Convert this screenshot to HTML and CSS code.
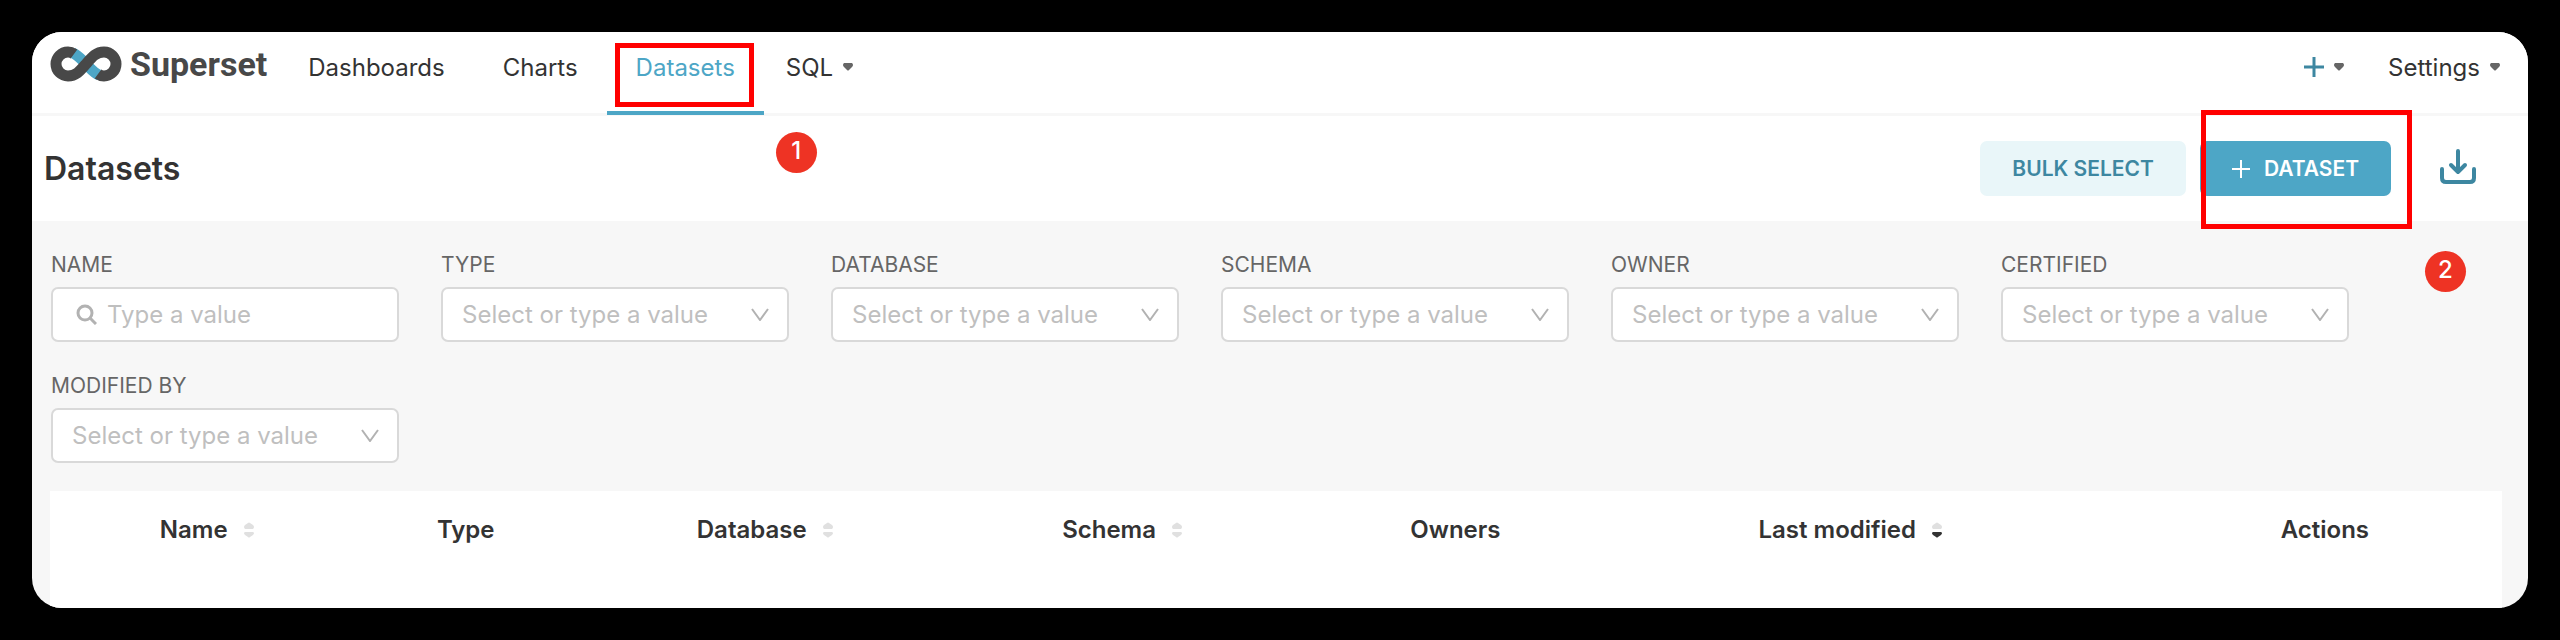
FILE: index.html
```html
<!DOCTYPE html>
<html lang="en">
<head>
    <meta charset="UTF-8">
    <meta name="viewport" content="width=device-width, initial-scale=1.0">
    <title>Superset - Datasets</title>
    <link rel="stylesheet" href="styles.css">
</head>
<body>
    <div class="app">
        <nav class="navbar">
            <a class="brand" href="#">
                <svg class="brand-logo" viewBox="0 0 72 36" fill="none" aria-hidden="true">
                    <path d="M23 7 C28 9 32 14 36 18 C40 22 44 27 49 29" stroke="#4da6c6" stroke-width="11"/>
                    <path d="M24 8 C22 6.500 20 6 18 6 A12 12 0 0 0 18 30 C26 30 30 25 36 18 C42 11 46 6 54 6 A12 12 0 0 1 54 30 C52 30 50 29.500 48 28" stroke="#484848" stroke-width="11"/>
                </svg>
                <span>Superset</span>
            </a>
            <ul class="menu">
                <li><a href="#">Dashboards</a></li>
                <li><a href="#">Charts</a></li>
                <li class="active">
                    <a href="#">Datasets</a>
                    <span class="outline outline-nav"></span>
                    <span class="step step-nav">1</span>
                </li>
                <li class="dropdown"><a href="#">SQL <svg class="caret" viewBox="0 0 10 8"><path d="M1 0H9Q11 2 9 4L6 7Q5 8 4 7L1 4Q-1 2 1 0Z"/></svg></a></li>
            </ul>
            <ul class="menu menu-right">
                <li><a href="#" aria-label="Create new"><svg class="plus" viewBox="0 0 20 20"><path d="M10 0V20M0 10H20"/></svg> <svg class="caret" viewBox="0 0 10 8"><path d="M1 0H9Q11 2 9 4L6 7Q5 8 4 7L1 4Q-1 2 1 0Z"/></svg></a></li>
                <li><a href="#">Settings <svg class="caret" viewBox="0 0 10 8"><path d="M1 0H9Q11 2 9 4L6 7Q5 8 4 7L1 4Q-1 2 1 0Z"/></svg></a></li>
            </ul>
        </nav>

        <header class="page-header">
            <h1>Datasets</h1>
            <div class="actions">
                <button class="btn btn-secondary" type="button">BULK SELECT</button>
                <div class="create">
                    <button class="btn btn-primary" type="button">
                        <svg class="btn-plus" viewBox="0 0 18 18"><path d="M9 0V18M0 9H18"/></svg>
                        DATASET
                    </button>
                    <span class="outline outline-create"></span>
                    <span class="step step-create">2</span>
                </div>
                <button class="btn-import" type="button" aria-label="Import datasets">
                    <svg viewBox="0 2 36 36"><path d="M18 2V23M11 16L18 23L25 16M2 20V29Q2 33 6 33H30Q34 33 34 29V20"/></svg>
                </button>
            </div>
        </header>

        <form class="filters">
            <div class="filter">
                <label for="name">NAME</label>
                <div class="field">
                    <svg class="search" viewBox="0 0 21 21"><circle cx="9" cy="9" r="7"/><path d="M14 14L20 20"/></svg>
                    <input id="name" type="text" placeholder="Type a value">
                </div>
            </div>
            <div class="filter">
                <label for="type">TYPE</label>
                <div class="field">
                    <select id="type"><option>Select or type a value</option></select>
                    <svg class="chevron" viewBox="0 0 18 13"><path d="M1 1L9 12L17 1"/></svg>
                </div>
            </div>
            <div class="filter">
                <label for="database">DATABASE</label>
                <div class="field">
                    <select id="database"><option>Select or type a value</option></select>
                    <svg class="chevron" viewBox="0 0 18 13"><path d="M1 1L9 12L17 1"/></svg>
                </div>
            </div>
            <div class="filter">
                <label for="schema">SCHEMA</label>
                <div class="field">
                    <select id="schema"><option>Select or type a value</option></select>
                    <svg class="chevron" viewBox="0 0 18 13"><path d="M1 1L9 12L17 1"/></svg>
                </div>
            </div>
            <div class="filter">
                <label for="owner">OWNER</label>
                <div class="field">
                    <select id="owner"><option>Select or type a value</option></select>
                    <svg class="chevron" viewBox="0 0 18 13"><path d="M1 1L9 12L17 1"/></svg>
                </div>
            </div>
            <div class="filter">
                <label for="certified">CERTIFIED</label>
                <div class="field">
                    <select id="certified"><option>Select or type a value</option></select>
                    <svg class="chevron" viewBox="0 0 18 13"><path d="M1 1L9 12L17 1"/></svg>
                </div>
            </div>
            <div class="filter">
                <label for="modified-by">MODIFIED BY</label>
                <div class="field">
                    <select id="modified-by"><option>Select or type a value</option></select>
                    <svg class="chevron" viewBox="0 0 18 13"><path d="M1 1L9 12L17 1"/></svg>
                </div>
            </div>
        </form>

        <main class="list">
            <table>
                <thead>
                    <tr>
                        <td class="col-icon"></td>
                        <th class="col-name">Name <svg class="sorter" viewBox="0 0 10 16"><path d="M1 7Q-1 5 1 3L4 1Q5 0 6 1L9 3Q11 5 9 7Z"/><path d="M1 10H9Q11 11 9 13L6 15Q5 16 4 15L1 13Q-1 11 1 10Z"/></svg></th>
                        <th class="col-type">Type</th>
                        <th class="col-database">Database <svg class="sorter" viewBox="0 0 10 16"><path d="M1 7Q-1 5 1 3L4 1Q5 0 6 1L9 3Q11 5 9 7Z"/><path d="M1 10H9Q11 11 9 13L6 15Q5 16 4 15L1 13Q-1 11 1 10Z"/></svg></th>
                        <th class="col-schema">Schema <svg class="sorter" viewBox="0 0 10 16"><path d="M1 7Q-1 5 1 3L4 1Q5 0 6 1L9 3Q11 5 9 7Z"/><path d="M1 10H9Q11 11 9 13L6 15Q5 16 4 15L1 13Q-1 11 1 10Z"/></svg></th>
                        <th class="col-owners">Owners</th>
                        <th class="col-modified">Last modified <svg class="sorter" viewBox="0 0 10 16"><path d="M1 7Q-1 5 1 3L4 1Q5 0 6 1L9 3Q11 5 9 7Z"/><path class="sorted" d="M1 10H9Q11 11 9 13L6 15Q5 16 4 15L1 13Q-1 11 1 10Z"/></svg></th>
                        <th>Actions</th>
                    </tr>
                </thead>
            </table>
        </main>
    </div>
</body>
</html>
```
FILE: styles.css
```css
* {
    box-sizing: border-box;
}

body {
    display: flex;
    min-height: 100vh;
    margin: 0;
    padding: 32px;
    background: #000;
    color: #333;
    font-family: Inter, 'Liberation Sans', sans-serif;
    font-size: 24px;
}

.app {
    display: flex;
    flex: 1;
    flex-direction: column;
    min-width: 0;
    border-radius: 30px;
    overflow: hidden;
    background: #f7f7f7;
}

a {
    color: inherit;
    text-decoration: none;
}

svg {
    flex: none;
}

/* Top navigation */
.navbar {
    display: flex;
    height: 84px;
    padding: 0 28px 0 18px;
    border-bottom: 3px solid #f7f7f7;
    background: #fff;
}

.brand {
    display: flex;
    align-items: center;
    gap: 8px;
    height: 64px;
    margin-right: 12px;
    color: #484848;
    font-family: Roboto, sans-serif;
    font-size: 34px;
    font-weight: 700;
}

.brand-logo {
    width: 72px;
    height: 36px;
}

.menu {
    display: flex;
    margin: 0;
    padding: 0;
    list-style: none;
}

.menu li {
    position: relative;
    padding: 0 29px;
}

.menu a {
    display: flex;
    align-items: center;
    gap: 10px;
    height: 70px;
}

.menu .active {
    color: #4da6c6;
}

.menu .active::after {
    content: '';
    position: absolute;
    right: 0;
    bottom: -2px;
    left: 0;
    height: 4px;
    background: #4da6c6;
}

.menu .dropdown {
    padding: 0 22px;
}

.menu-right {
    gap: 44px;
    margin-left: auto;
}

.menu-right li {
    padding: 0;
}

.caret {
    width: 10px;
    height: 8px;
    fill: #666;
}

.plus {
    width: 20px;
    height: 20px;
    stroke: #3d87a1;
    stroke-width: 3;
}

/* Page title and actions */
.page-header {
    display: flex;
    align-items: center;
    justify-content: space-between;
    height: 105px;
    padding: 0 52px 0 12px;
    background: #fff;
}

h1 {
    margin: 0;
    font-size: 32px;
    font-weight: 600;
}

.actions {
    display: flex;
    align-items: center;
    gap: 14px;
}

.btn {
    display: flex;
    align-items: center;
    gap: 14px;
    height: 55px;
    padding: 0 32px;
    border: 0;
    border-radius: 7px;
    font: 600 21px Inter, 'Liberation Sans', sans-serif;
    cursor: pointer;
}

.btn-secondary {
    background: #e9f6f9;
    color: #3d87a1;
}

.btn-primary {
    background: #4da6c6;
    color: #fff;
}

.btn-plus {
    width: 18px;
    height: 18px;
    stroke: #fff;
    stroke-width: 2;
}

.btn-import {
    height: 36px;
    margin-left: 35px;
    padding: 0;
    border: 0;
    background: none;
    cursor: pointer;
}

.btn-import svg {
    display: block;
    width: 36px;
    height: 36px;
    overflow: visible;
    fill: none;
    stroke: #3d87a1;
    stroke-width: 4;
    stroke-linecap: round;
    stroke-linejoin: round;
}

/* Walkthrough markers */
.create {
    position: relative;
}

.outline {
    position: absolute;
    z-index: 1;
    border: 5px solid #f00;
    pointer-events: none;
}

.outline-nav {
    top: 11px;
    right: 10px;
    bottom: 6px;
    left: 8px;
}

.outline-create {
    top: -31px;
    right: -21px;
    bottom: -33px;
    left: 1px;
}

.step {
    position: absolute;
    z-index: 1;
    width: 41px;
    height: 41px;
    border-radius: 50%;
    background: #ee3324;
    color: #fff;
    font-weight: 500;
    line-height: 38px;
    text-align: center;
}

.step-nav {
    top: 100px;
    right: -53px;
}

.step-create {
    top: 110px;
    right: -75px;
}

/* Filters */
.filters {
    display: flex;
    flex-wrap: wrap;
    gap: 28px 42px;
    padding: 28px 19px;
}

.filter {
    width: 348px;
}

.filter label {
    display: block;
    margin-bottom: 6px;
    color: #666;
    font-size: 21px;
    line-height: 32px;
}

.field {
    display: flex;
    align-items: center;
    position: relative;
    height: 55px;
    border: 2px solid #d9d9d9;
    border-radius: 7px;
    background: #fff;
}

.field input,
.field select {
    flex: 1;
    min-width: 0;
    height: 100%;
    padding: 0 19px;
    border: 0;
    outline: 0;
    background: none;
    color: #bfbfbf;
    font: 24px Inter, 'Liberation Sans', sans-serif;
    appearance: none;
}

.field input {
    padding: 0 10px;
}

.field input::placeholder {
    color: #bfbfbf;
}

.search {
    width: 21px;
    height: 21px;
    margin-left: 23px;
    fill: none;
    stroke: #b2b2b2;
    stroke-width: 3;
}

.chevron {
    position: absolute;
    right: 18px;
    width: 18px;
    height: 13px;
    fill: none;
    stroke: #b2b2b2;
    stroke-width: 2;
    pointer-events: none;
}

/* Dataset table */
.list {
    flex: 1;
    margin: 0 26px 0 18px;
    background: #fff;
}

table {
    width: 100%;
    border-collapse: collapse;
    table-layout: fixed;
}

th {
    height: 77px;
    padding: 0 24px;
    font-weight: 600;
    text-align: left;
}

.col-icon { width: 3.5%; }
.col-name { width: 11.3%; }
.col-type { width: 10.6%; }
.col-database { width: 14.9%; }
.col-schema { width: 14.2%; }
.col-owners { width: 14.2%; }
.col-modified { width: 21.3%; }

.sorter {
    width: 10px;
    height: 16px;
    margin-left: 10px;
    fill: #e0e0e0;
}

.sorted {
    fill: #333;
}
```
